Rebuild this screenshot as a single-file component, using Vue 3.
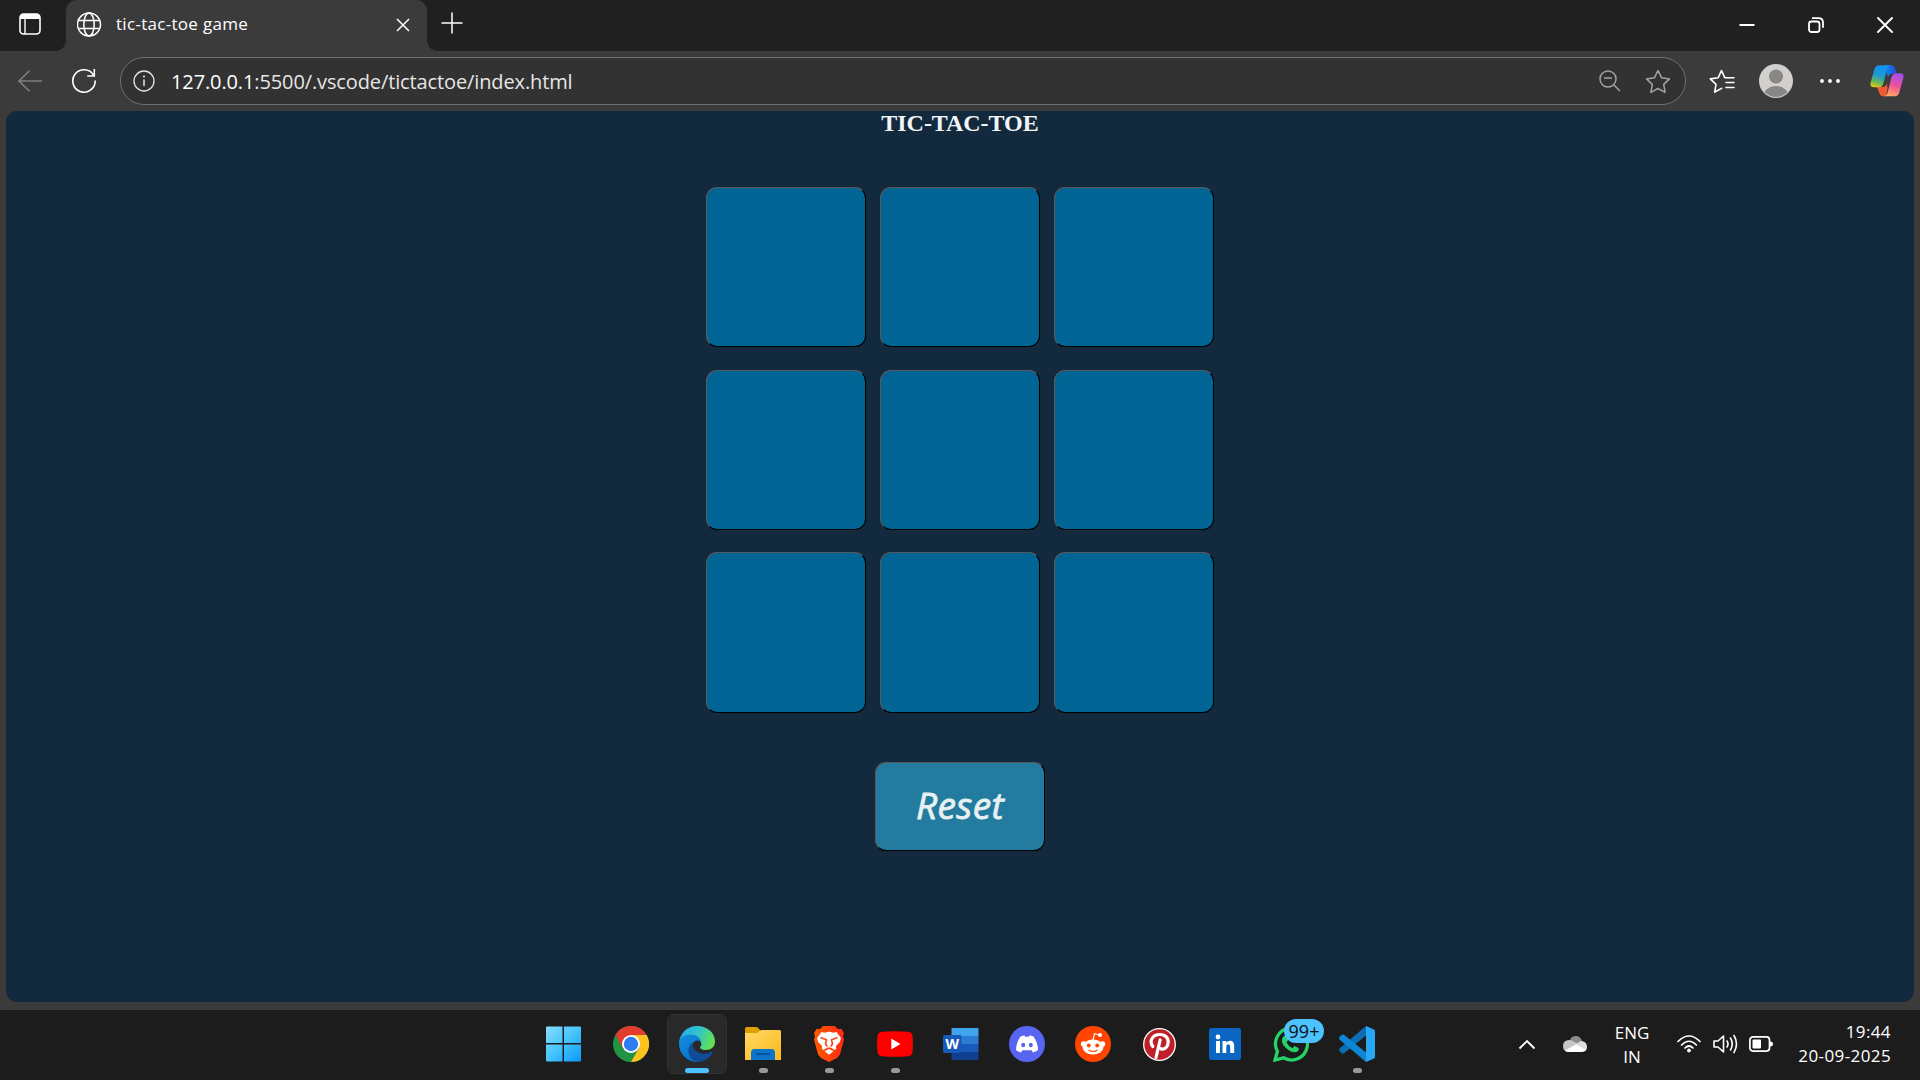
<script setup>
const cells = Array.from({ length: 9 }, (_, i) => i)
</script>

<template>
  <div class="screen">
    <header class="tabs">
      <div class="workspace">
        <svg width="22" height="22" viewBox="0 0 22 22"><rect x="1" y="1" width="20" height="20" rx="3.5" fill="none" stroke="#fff" stroke-width="1.6" /><path d="M1 6V4.500Q1 1 4.500 1h13Q21 1 21 4.500V6z" fill="#fff" /><path d="M6 6v15" stroke="#fff" stroke-width="1.400" /></svg>
      </div>
      <div class="tab">
        <svg class="globe" width="25" height="25" viewBox="0 0 25 25" fill="none" stroke="#fff" stroke-width="1.500"><circle cx="12" cy="12.500" r="11.500" /><ellipse cx="12" cy="12.500" rx="5.200" ry="11.500" /><path d="M1.500 8.500h21M1.500 16.500h21" /></svg>
        <span class="tab-title">tic-tac-toe game</span>
        <svg class="tab-x" width="14" height="14" viewBox="0 0 14 14"><path d="M1 1l12 12M13 1L1 13" stroke="#fff" stroke-width="1.500" /></svg>
      </div>
      <svg class="plus" width="22" height="22" viewBox="0 0 22 22"><path d="M11 .5v21M.5 11h21" stroke="#fff" stroke-width="1.500" /></svg>
      <div class="controls">
        <svg width="16" height="16" viewBox="0 0 16 16"><path d="M.5 8h15" stroke="#fff" stroke-width="2" /></svg>
        <svg width="16" height="16" viewBox="0 0 16 16" fill="none" stroke="#fff" stroke-width="1.800"><rect x="1" y="4.500" width="10.500" height="10.500" rx="2.500" /><path d="M4 1.200h6.500q4.500 0 4.500 4.500v5" /></svg>
        <svg width="16" height="16" viewBox="0 0 16 16"><path d="M1 1l14 14M15 1L1 15" stroke="#fff" stroke-width="1.900" stroke-linecap="round" /></svg>
      </div>
    </header>

    <div class="toolbar">
      <svg class="back" width="24" height="22" viewBox="0 0 24 22" fill="none" stroke="#7f7f7f" stroke-width="1.600"><path d="M24 11H1M11.500.8L1 11l10.500 10.200" /></svg>
      <svg class="reload" width="26" height="26" viewBox="0 0 26 26" fill="none" stroke="#fff" stroke-width="1.600"><path d="M22.800 7.500A11.200 11.200 0 1 0 24.200 13" stroke-linecap="round" /><path d="M23.300 1V8H16.300" /></svg>
      <div class="address">
        <svg class="info" width="22" height="22" viewBox="0 0 22 22"><circle cx="11" cy="11" r="10" fill="none" stroke="#e6e6e6" stroke-width="1.300" /><path d="M11 9.500v6.500" stroke="#e6e6e6" stroke-width="1.500" /><circle cx="11" cy="6.500" r="1.100" fill="#e6e6e6" /></svg>
        <span class="url"><b>127.0.0.1</b>:5500/.vscode/tictactoe/index.html</span>
        <svg class="mag" width="22" height="22" viewBox="0 0 22 22" fill="none" stroke="#a3a3a3" stroke-width="1.500"><circle cx="9" cy="9" r="8" /><path d="M5 8h8M14.700 14.700L21 21" /></svg>
        <svg class="star" width="26" height="25" viewBox="0 0 26 25" fill="none" stroke="#a3a3a3" stroke-width="1.500" stroke-linejoin="round"><path d="M13 1.500l3.500 7.200 8 1.200-5.800 5.500 1.400 7.900L13 19.500l-7.100 3.800 1.400-7.900L1.500 9.900l8-1.200z" /></svg>
      </div>
      <svg class="favs" width="26" height="25" viewBox="0 0 26 25" fill="none" stroke="#fff" stroke-width="1.600" stroke-linejoin="round" stroke-linecap="round"><path d="M15.800 8.700L12.500 1.500 9.200 8.700 1.300 9.900l5.700 5.500-1.300 7.700 7-3.800M15.800 8.700H25M17 13.500h8M17 18.500h8" /></svg>
      <svg class="avatar" width="34" height="34" viewBox="0 0 34 34"><defs><clipPath id="av"><circle cx="17" cy="17" r="16" /></clipPath></defs><circle cx="17" cy="17" r="17" fill="#d2d0ce" /><g clip-path="url(#av)" fill="#8a8886"><circle cx="17" cy="12.500" r="7" /><ellipse cx="17" cy="32" rx="12.500" ry="10" /></g></svg>
      <svg class="dots" width="20" height="4" viewBox="0 0 20 4" fill="#fff"><circle cx="2" cy="2" r="1.900" /><circle cx="10" cy="2" r="1.900" /><circle cx="18" cy="2" r="1.900" /></svg>
      <svg class="copilot" width="34" height="32" viewBox="0 0 34 32">
        <defs>
          <linearGradient id="c1" x1=".3" y1="0" x2="0" y2="1"><stop offset="0" stop-color="#1094ee" /><stop offset=".4" stop-color="#1f9bd0" /><stop offset=".7" stop-color="#66b858" /><stop offset="1" stop-color="#ffd400" /></linearGradient>
          <linearGradient id="c2" x1=".6" y1="0" x2=".3" y2="1"><stop offset="0" stop-color="#a24df0" /><stop offset=".5" stop-color="#f0529a" /><stop offset="1" stop-color="#ffae5c" /></linearGradient>
          <linearGradient id="c3"><stop offset="0" stop-color="#0a8df0" /><stop offset="1" stop-color="#1c4fdd" /></linearGradient>
        </defs>
        <path d="M14 .3h7q3.200 0 4 3l1.500 5.200h-4Q19.500 8.500 18 12z" fill="url(#c3)" />
        <path d="M7 22h5.500q3.500 0 4.500-4l.5 6-1.500 7.300h-2.500q-3.300 0-4-3z" fill="#f4592f" />
        <path d="M9.500.3H21q-2.800 0-4 4L13.500 18q-1 4.200-4.500 4.200H4Q-.5 22.200.7 17.500L4.500 4Q5.800.3 9.500.3z" fill="url(#c1)" />
        <path d="M25 31.300H13.500q3.200 0 4.200-4l3.500-14q1.300-5 5.300-5H30q4.500 0 3.300 4.700l-4 14.500q-1.200 3.800-4.300 3.800z" fill="url(#c2)" />
      </svg>
    </div>

    <main class="page">
      <h1>TIC-TAC-TOE</h1>
      <div class="board">
        <button v-for="c in cells" :key="c" class="cell"></button>
      </div>
      <button class="reset">Reset</button>
    </main>

    <footer class="taskbar">
      <div class="apps">
        <div class="app start"><svg width="36" height="36" viewBox="-.5 0 36 36"><defs><linearGradient id="w" x1="0" y1="0" x2="1" y2="1"><stop offset="0" stop-color="#86dcff" /><stop offset=".5" stop-color="#46c4fb" /><stop offset="1" stop-color="#0899fb" /></linearGradient></defs><path d="M1.500.5H17v16.500H.5V1.500a1 1 0 0 1 1-1zM18.500.5h16a1 1 0 0 1 1 1V17h-17zM.5 18.500H17v17H1.500a1 1 0 0 1-1-1zM18.500 18.500h17v16a1 1 0 0 1-1 1h-16z" fill="url(#w)" /></svg></div>
        <div class="app"><svg width="36" height="36" viewBox="0 0 36 36"><circle cx="18" cy="18" r="18" fill="#229342" /><path d="M18 9H33.600A18 18 0 0 1 18 36L25.800 22.500z" fill="#fcc31e" /><path d="M2.400 9A18 18 0 0 1 33.600 9H18L10.200 22.500z" fill="#e33b2e" /><circle cx="18" cy="18" r="9" fill="#fff" /><circle cx="18" cy="18" r="7.200" fill="#2f7bf0" /></svg></div>
        <div class="app active"><svg width="36" height="36" viewBox="0 0 36 36">
          <defs><linearGradient id="e1" x1="0" y1=".2" x2="1" y2=".5"><stop offset="0" stop-color="#2aa9ea" /><stop offset=".5" stop-color="#2fc5cd" /><stop offset="1" stop-color="#65e250" /></linearGradient><linearGradient id="e2" x1="0" y1="0" x2=".5" y2="1"><stop offset="0" stop-color="#1590df" /><stop offset="1" stop-color="#0670ca" /></linearGradient></defs>
          <path d="M0 17C1 7 8 0 18 0c10.500 0 18 7 18 15.500 0 5.500-4 8.500-9 8.500-4 0-6.500-1.500-6-3 1.500-1.500 1.800-3 1-4.500C20 12 14 9 8 10c-4 1-7 4-8 7z" fill="url(#e1)" />
          <path d="M0 18C0 12 5 8.500 11 8.500c6 0 10.500 3 11.300 7.500-2-2.200-6-2.200-8.300 1-4 6 0 16 7 18.500C9 38 0 28 0 18z" fill="url(#e2)" />
          <path d="M14 16.500c-1 3 0 6 3 8.500 4 3.500 10 3.500 15.500.8 1-.5 1.500.2 1 1C30.500 32.500 25 36 19 36c-6-1-9.500-6-9.500-11 0-4 2-7 4.500-8.500z" fill="#104c97" />
        </svg><i class="bar blue"></i></div>
        <div class="app"><svg width="36" height="34" viewBox="0 0 36 34"><defs><linearGradient id="f" x1="0" y1="0" x2="1" y2="1"><stop offset="0" stop-color="#ffd866" /><stop offset="1" stop-color="#fcb91c" /></linearGradient></defs><path d="M0 1.500Q0 0 1.500 0H11q1.500 0 2.300 1L15 3v5H0z" fill="#dea000" /><path d="M0 6h11q1.500 0 2.500-1l1.200-1.200Q15.500 3 17 3H34.500Q36 3 36 4.500V33H0z" fill="url(#f)" /><path d="M6 33v-7.500Q6 22 9.500 22h17q3.500 0 3.500 3.500V33z" fill="#0d74c9" /><path d="M11.500 27h13" stroke="#054b8d" stroke-width="1.600" stroke-linecap="round" /></svg><i class="bar"></i></div>
        <div class="app"><svg width="30" height="36" viewBox="0 0 30 36"><defs><linearGradient id="b"><stop offset="0" stop-color="#ff5a00" /><stop offset="1" stop-color="#ff2a15" /></linearGradient></defs><path d="M9 0h12l3 3.300 3.300-.5L30 7l-1 3.500 1 3-4 15-3 3.500-8 4-8-4-3-3.500-4-15 1-3L0 7l2.700-4.200 3.300.5z" fill="url(#b)" /><path d="M7.500 6l3.500.8 4-1.300 4 1.300 3.500-.8 4.500 6-1.200 4-4 4.300.5 2.400-1.800 1.200-3.800-2.400h-3.400L9.500 23.900l-1.800-1.200.5-2.400-4-4.300L3 12z" fill="#fff" /><path d="M6.500 11.500l6 2.200-1 4.300 1.800 2.500M23.500 11.500l-6 2.200 1 4.300-1.800 2.500" fill="none" stroke="#fb4a1c" stroke-width="1.700" stroke-linejoin="round" /><path d="M10.500 25.200L15 23l4.500 2.200-4.500 3.500z" fill="#fff" /></svg><i class="bar"></i></div>
        <div class="app"><svg width="36" height="26" viewBox="0 0 36 26"><path d="M5 .8Q18-.4 31 .8q4 .4 4.500 4.200.8 8 0 16-.5 3.800-4.500 4.200-13 1.200-26 0Q1 24.800.5 21-.3 13 .5 5 1 1.200 5 .8z" fill="#f00" /><path d="M14.300 7.500L23.500 13l-9.200 5.500z" fill="#fff" /></svg><i class="bar"></i></div>
        <div class="app"><svg width="36" height="32" viewBox="0 0 36 32"><path d="M8.500 1q0-1 1-1h25q1 0 1 1v7h-27z" fill="#41a5ee" /><path d="M8.500 8h27v8h-27z" fill="#2b7cd3" /><path d="M8.500 16h27v8h-27z" fill="#185abd" /><path d="M8.500 24h27v7q0 1-1 1h-25q-1 0-1-1z" fill="#103f91" /><rect x="0" y="7" width="18.500" height="18" rx="1.500" fill="#1859b7" /><text x="9.200" y="20.800" text-anchor="middle" font-family="Open Sans" font-size="14" font-weight="700" fill="#fff">W</text></svg></div>
        <div class="app"><svg width="36" height="36" viewBox="0 0 36 36"><circle cx="18" cy="18" r="18" fill="#5865f2" /><path d="M11.500 10.500q2-.9 4-1l.8 1.300h3.400l.8-1.300q2 .1 4 1Q29 17 29 24q-2 1.800-5 2.500l-1.500-2.200h-9L12 26.500Q9 25.800 7 24q0-7 4.500-13.500z" fill="#fff" /><ellipse cx="14.200" cy="19" rx="2" ry="2.200" fill="#5865f2" /><ellipse cx="21.800" cy="19" rx="2" ry="2.200" fill="#5865f2" /></svg></div>
        <div class="app"><svg width="36" height="36" viewBox="0 0 36 36"><circle cx="18" cy="18" r="18" fill="#ff4500" /><circle cx="8.500" cy="18" r="2.700" fill="#fff" /><circle cx="27.500" cy="18" r="2.700" fill="#fff" /><ellipse cx="18" cy="21" rx="10.500" ry="7.500" fill="#fff" /><path d="M18 14l1.500-6.300 5 1.300" fill="none" stroke="#fff" stroke-width="1.200" /><circle cx="25" cy="9" r="2" fill="#fff" /><circle cx="13.800" cy="19.500" r="1.900" fill="#ff4500" /><circle cx="22.200" cy="19.500" r="1.900" fill="#ff4500" /><path d="M13.500 24q4.500 3 9 0" fill="none" stroke="#ff4500" stroke-width="1.200" /></svg></div>
        <div class="app"><svg width="33" height="33" viewBox="0 0 33 33"><circle cx="16.500" cy="16.500" r="15.800" fill="#bd2028" stroke="#fff" stroke-width="1.300" /><path d="M9.800 18.500C5.500 12.500 10 6.500 16.800 6.500c6 0 9.200 4 8.300 8.800-.9 5-5 7.200-8.300 4.800M17.200 12l-4.200 17.500" fill="none" stroke="#fff" stroke-width="3.200" stroke-linecap="round" /></svg></div>
        <div class="app"><svg width="32" height="32" viewBox="0 0 32 32"><rect width="32" height="32" rx="2.500" fill="#0a66c2" /><circle cx="9" cy="9" r="2.400" fill="#fff" /><path d="M7 13h4v12H7zM13.500 13h3.800v1.700q1.300-2 3.900-2 4 0 4 5.500V25h-4v-6q0-2.800-1.800-2.800-2.100 0-2.100 2.800v6h-3.800z" fill="#fff" /></svg></div>
        <div class="app"><svg width="36" height="36" viewBox="0 0 36 36"><path d="M2 34l2.400-8.500A16 16 0 1 1 10.500 31.800z" fill="none" stroke="#25d366" stroke-width="3.300" /><path d="M10 11q1.500-2 3.500-1l1.500 4-1.500 2.500q2 4 6 5.700l2-2.200 4 2q1 1-.5 3-3 2.500-8 0-6-3.500-8-9-.7-3 1-5z" fill="#25d366" /></svg><span class="badge">99+</span></div>
        <div class="app"><svg width="36" height="36" viewBox="0 0 36 36"><path d="M27 0v9.500L5 27.200q-1.200.8-2.500-.2l-2-2q-1-1.500.5-3z" fill="#0c6fb4" /><path d="M.5 11l2-2q1.200-1 2.500-.2l22 17.700V36L1 14q-1.500-1.500-.5-3z" fill="#0d86d6" /><path d="M27 0l8 3.500q1 .5 1 2v25q0 1.500-1 2L27 36z" fill="#27a7f4" /></svg><i class="bar"></i></div>
      </div>
      <div class="tray">
        <svg class="chev" width="18" height="11" viewBox="0 0 18 11"><path d="M1.500 9.500L9 2l7.500 7.500" fill="none" stroke="#fff" stroke-width="1.900" /></svg>
        <svg class="cloud" width="24" height="16" viewBox="0 0 24 16"><path d="M6.500 5Q8 0 13 0q4 0 6 5l-6 5z" fill="#8c8c8c" /><path d="M0 10q0-5.500 6-6 2.500 0 4 1.200L17 9 3 15.500Q0 14 0 10z" fill="#c6c6c6" /><path d="M13 8l5-3q6 .5 6 6 0 4.500-5 4.700L10 13z" fill="#dedede" /><path d="M2 14.500l11-6L23 14q-1.500 2-4.500 2H5.500Q3.500 16 2 14.500z" fill="#fff" /></svg>
        <div class="lang"><span>ENG</span><span>IN</span></div>
        <svg class="wifi" width="24" height="18" viewBox="0 0 24 18" fill="none" stroke="#fff" stroke-width="1.700" stroke-linecap="round"><path d="M1 6.500Q12-4.500 23 6.500M4.600 10Q12 2.500 19.400 10M8 13Q12 9 16 13" /><circle cx="12" cy="15.500" r="1.500" fill="#fff" stroke-width="1" /></svg>
        <svg class="vol" width="25" height="20" viewBox="0 0 25 20" fill="none" stroke="#fff" stroke-width="1.600" stroke-linejoin="round" stroke-linecap="round"><path d="M1 7h4l5.500-5v16L5 13H1zM14 7q2 3 0 6M17.500 4q3.500 6 0 12M21 1.500q5 8.500 0 17" /></svg>
        <svg class="batt" width="24" height="16" viewBox="0 0 24 16"><rect x=".9" y=".9" width="19.600" height="14.200" rx="3" fill="none" stroke="#fff" stroke-width="1.700" /><rect x="3.500" y="3.500" width="8.500" height="9" rx="1" fill="#fff" /><path d="M21 5.500q3 0 3 2.500t-3 2.500z" fill="#fff" /></svg>
        <div class="clock"><span>19:44</span><span>20-09-2025</span></div>
      </div>
    </footer>
  </div>
</template>

<style>
body { margin: 0; overflow: hidden; background: #3b3b3b; }
</style>

<style scoped>
.screen { width: 1920px; height: 1080px; display: flex; flex-direction: column; background: #3b3b3b; color: #fff; font-family: "Open Sans", "Noto Sans", sans-serif; overflow: hidden; }
svg { display: block; flex: none; }
.tabs { height: 51px; display: flex; background: #202020; flex: none; }
.workspace { width: 66px; box-sizing: border-box; padding: 13px 0 0 19px; }
.tab { position: relative; width: 361px; box-sizing: border-box; background: #3b3b3b; border-radius: 11px 11px 0 0; display: flex; align-items: center; padding: 0 17px 3px 11px; }
.tab::before, .tab::after { content: ""; position: absolute; bottom: 0; width: 10px; height: 10px; }
.tab::before { left: -10px; background: radial-gradient(circle at 0 0, transparent 9.5px, #3b3b3b 10px); }
.tab::after { right: -10px; background: radial-gradient(circle at 100% 0, transparent 9.5px, #3b3b3b 10px); }
.tab-title { margin-left: 14px; font-size: 17px; line-height: 24px; letter-spacing: 0.3px; flex: 1; }
.tab-x { margin-top: 2px; }
.plus { margin: 12px 0 0 14px; }
.controls { margin-left: auto; display: flex; gap: 53px; padding: 17px 27px 0 0; }
.toolbar { height: 60px; flex: none; display: flex; align-items: center; box-sizing: border-box; padding-left: 18px; }
.reload { margin-left: 29px; }
.address { width: 1566px; height: 48px; box-sizing: border-box; margin-left: 23px; border: 1.5px solid #707070; border-radius: 24px; background: #323232; display: flex; align-items: center; padding-left: 12px; }
.url { margin: 1px 0 0 16px; font-size: 20px; line-height: 28px; letter-spacing: -0.12px; white-space: nowrap; width: 1428px; color: #e6e6e6; }
.url b { font-weight: 400; color: #fff; }
.star { margin-left: 24px; }
.favs { margin-left: 23px; }
.avatar { margin-left: 24px; }
.dots { margin-left: 27px; }
.copilot { margin-left: 30px; }
.page { width: 1908px; height: 891px; margin: 0 6px; flex: none; background: #13293d; border-radius: 11px; display: flex; flex-direction: column; align-items: center; }
h1 { margin: 0; font: bold 24px/25px "Liberation Serif", serif; letter-spacing: -0.05px; color: #f1f5f6; }
.board { margin-top: 51px; display: grid; grid-template-columns: repeat(3, 160px); grid-auto-rows: 160.4px; gap: 22.2px 14px; }
.cell, .reset { box-sizing: border-box; padding: 0; border: 1px solid; border-color: #5a5a5a #000 #000 #5a5a5a; border-radius: 11px; background: #006494; }
.reset { margin-top: 49.4px; width: 170px; height: 89px; padding-bottom: 2px; background: #247ba0; color: #e8f1f2; font: italic 37px/48px "Open Sans", sans-serif; letter-spacing: 0.4px; -webkit-text-stroke: 0.8px #e8f1f2; }
.taskbar { margin-top: 8px; height: 70px; background: #1c1c1c; display: flex; flex: none; justify-content: space-between; }
.apps { display: flex; gap: 6px; padding: 4px 0 0 533px; }
.app { position: relative; width: 60px; height: 60px; display: flex; align-items: center; justify-content: center; box-sizing: border-box; }
.start { margin-right: 2px; }
.app.active { background: #292929; border: 1px solid #333; border-radius: 7px; }
.bar { position: absolute; left: 50%; bottom: 1px; width: 9px; height: 5px; margin-left: -4.5px; border-radius: 3px; background: #999; }
.bar.blue { width: 24px; margin-left: -12px; bottom: 0; background: #4cc2ff; }
.badge { position: absolute; left: 23px; top: 5px; width: 40px; height: 24px; border-radius: 12px; background: #4cc2ff; color: #111; font-size: 18px; line-height: 24px; text-align: center; }
.tray { display: flex; align-items: center; padding: 0 29px 2px 0; font-size: 17px; line-height: 24px; }
.lang span, .clock span { display: block; }
.cloud { margin-left: 27px; }
.lang { margin: 2px 0 0 27px; width: 36px; text-align: center; }
.wifi { margin-left: 27px; }
.vol { margin-left: 12px; }
.batt { margin-left: 11px; }
.clock { margin-left: 24px; width: 94px; text-align: right; white-space: nowrap; letter-spacing: 0.4px; }
</style>
